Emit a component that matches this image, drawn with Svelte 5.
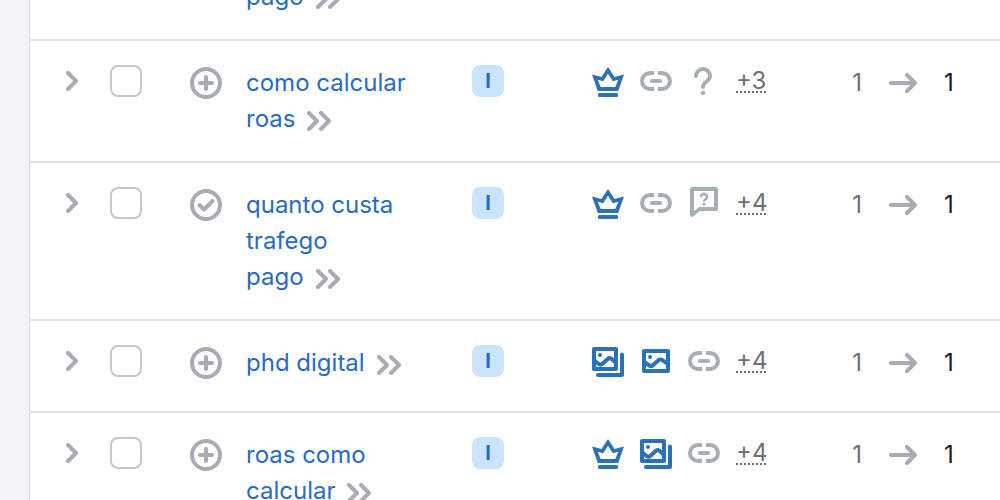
<script>
  const rows = [
    { start: 'como calcular', last: 'roas', added: false, features: ['crown', 'link', 'question'], more: 3 },
    { start: 'quanto custa trafego', last: 'pago', added: true, features: ['crown', 'link', 'bubble'], more: 4 },
    { start: 'phd', last: 'digital', added: false, features: ['images', 'image', 'link'], more: 4 },
    { start: 'roas como', last: 'calcular', added: false, features: ['crown', 'images', 'link'], more: 4 }
  ];
</script>

{#snippet doubleChevron()}
  <svg class="double" width="24" height="20" viewBox="0 0 24 20" aria-hidden="true">
    <path d="M2 2l8 8-8 8M14 2l8 8-8 8" />
  </svg>
{/snippet}

{#snippet feature(name)}
  <svg class="feature" class:blue={['crown', 'images', 'image'].includes(name)} viewBox="0 0 32 32" aria-hidden="true">
    {#if name === 'crown'}
      <path fill-rule="evenodd" d="M0 9.500L9.500 12 16 2l6.500 10L32 9.500 26.200 26H5.800ZM5.700 14.800L8.700 22h14.600l3-7.200-5.500 1.400L16 8.800l-4.800 7.400Z" />
      <rect x="6" y="28" width="20" height="4" rx="1.500" />
    {:else if name === 'link'}
      <path class="line" d="M14 8h-4a8 8 0 0 0 0 16h4M18 8h4a8 8 0 0 1 0 16h-4" />
      <rect x="10" y="14" width="12" height="4" rx="2" />
    {:else if name === 'question'}
      <path class="line round" d="M8 11a7 7 0 0 1 14 0c0 5.500-7 5.500-7 11" />
      <circle cx="15" cy="28" r="2.200" />
    {:else if name === 'bubble'}
      <path fill-rule="evenodd" d="M4 0h24a2 2 0 0 1 2 2v20a2 2 0 0 1-2 2H12l-7 5.600A2 2 0 0 1 2 28V2a2 2 0 0 1 2-2ZM6 4v20.200L11 20h15V4Z" />
      <path class="thin" d="M13 10a3 3 0 1 1 5.500 1.500C17.500 12.500 16 12.600 16 14.500" />
      <circle cx="16" cy="17" r="1.500" />
    {:else if name === 'images'}
      <path fill-rule="evenodd" d="M2 2h22a2 2 0 0 1 2 2v20a2 2 0 0 1-2 2H2a2 2 0 0 1-2-2V4a2 2 0 0 1 2-2ZM4 6v16h18V6Z" />
      <circle cx="8" cy="10" r="2" />
      <path class="hill" d="M3 16l4 3.200q1.500 1 3 0L16 13.700q2-1.500 4 0.500l3 3" />
      <path d="M28 9.500a2 2 0 0 1 4 0V30a2 2 0 0 1-2 2H6a2 2 0 0 1 0-4h22Z" />
    {:else}
      <path fill-rule="evenodd" d="M4 4h24a2 2 0 0 1 2 2v20a2 2 0 0 1-2 2H4a2 2 0 0 1-2-2V6a2 2 0 0 1 2-2ZM6 8v16h20V8Z" />
      <circle cx="10" cy="12" r="2" />
      <path class="hill" d="M5 17.500l4.500 3q1.500 1 3 0L18.500 15.200q2-1.500 4 0l4.500 3.300" />
    {/if}
  </svg>
{/snippet}

<main class="page">
  <div class="panel">
    <table>
      <colgroup>
        <col class="col-small" />
        <col class="col-small" />
        <col class="col-keyword" />
        <col class="col-intent" />
        <col class="col-features" />
        <col />
      </colgroup>
      <tbody>
        <tr class="partial">
          <td></td>
          <td></td>
          <td>
            <div class="keyword continued">
              <a href="#keyword"><span class="tail">pago{@render doubleChevron()}</span></a>
            </div>
          </td>
          <td></td>
          <td></td>
          <td></td>
        </tr>
        {#each rows as row}
          <tr>
            <td>
              <button class="expand" aria-label="Expand row">
                <svg width="12" height="20" viewBox="0 0 12 20" aria-hidden="true"><path d="M2 2l8 8-8 8" /></svg>
              </button>
            </td>
            <td><input type="checkbox" aria-label="Select {row.start} {row.last}" /></td>
            <td>
              <div class="keyword">
                <button class="add" aria-label={row.added ? 'Added to list' : 'Add to list'}>
                  <svg width="32" height="32" viewBox="0 0 32 32" aria-hidden="true">
                    <circle cx="16" cy="16" r="14" />
                    <path d={row.added ? 'M9.500 16l4.500 4.500L22.500 12' : 'M10 16h12M16 10v12'} />
                  </svg>
                </button>
                <a href="#keyword">{row.start} <span class="tail">{row.last}{@render doubleChevron()}</span></a>
              </div>
            </td>
            <td><span class="intent">I</span></td>
            <td>
              <div class="features">
                {#each row.features as name}
                  {@render feature(name)}
                {/each}
                <button class="more">+{row.more}</button>
              </div>
            </td>
            <td>
              <div class="position">
                <span class="before">1</span>
                <svg width="32" height="20" viewBox="0 0 32 20" aria-hidden="true"><path d="M4 10h24M20 2l8 8-8 8" /></svg>
                <span>1</span>
              </div>
            </td>
          </tr>
        {/each}
      </tbody>
    </table>
  </div>
</main>

<style>
  :global(body) {
    background: #f3f4f9;
  }

  .page {
    box-sizing: border-box;
    height: 100vh;
    overflow: hidden;
    padding-left: 30px;
    font-family: Inter, sans-serif;
    font-size: 24px;
    line-height: 36px;
    color: #191b23;
  }

  .panel {
    min-height: 100%;
    background: #fff;
    box-shadow: 0 0 1px 1px #dcdee6;
  }

  table {
    width: 100%;
    margin-top: -21px;
    table-layout: fixed;
    border-collapse: separate;
    border-spacing: 0;
  }

  .col-small {
    width: 80px;
  }

  .col-keyword {
    width: 282px;
  }

  .col-intent {
    width: 120px;
  }

  .col-features {
    width: 258px;
  }

  td {
    box-sizing: border-box;
    height: 92px;
    padding: 24px 0;
    border-bottom: 2px solid #e0e1e9;
    vertical-align: top;
  }

  .partial td {
    height: auto;
    padding-top: 0;
  }

  button {
    padding: 0;
    border: 0;
    background: none;
    font: inherit;
    color: inherit;
    cursor: pointer;
  }

  svg {
    flex: none;
  }

  .expand,
  .add,
  .double,
  .position svg {
    fill: none;
    stroke: #a9abb6;
    stroke-width: 4;
    stroke-linecap: round;
    stroke-linejoin: round;
  }

  .expand {
    display: flex;
    align-items: center;
    height: 32px;
    padding-left: 36px;
  }

  input {
    display: block;
    box-sizing: border-box;
    width: 32px;
    height: 32px;
    margin: 0;
    border: 2px solid #c4c7cf;
    border-radius: 8px;
    appearance: none;
    background: #fff;
  }

  .keyword {
    display: flex;
    align-items: flex-start;
    gap: 24px;
  }

  .continued {
    padding-left: 56px;
  }

  .add {
    display: flex;
    align-items: center;
    height: 36px;
  }

  a {
    max-width: 176px;
    color: #286ac4;
    text-decoration: none;
  }

  .tail {
    white-space: nowrap;
  }

  .double {
    margin-left: 12px;
    vertical-align: -4px;
  }

  .intent {
    display: block;
    width: 32px;
    border-radius: 8px;
    background: #c9e4fc;
    color: #286ac4;
    font-size: 20px;
    font-weight: 700;
    line-height: 32px;
    text-align: center;
  }

  .features {
    display: flex;
    gap: 16px;
    height: 32px;
  }

  .feature {
    width: 32px;
    height: 32px;
    fill: #a6afb3;
    stroke: none;
  }

  .feature.blue {
    fill: #2b71ba;
  }

  .line,
  .thin,
  .hill {
    fill: none;
    stroke: #a6afb3;
    stroke-width: 4;
  }

  .round {
    stroke-linecap: round;
  }

  .thin {
    stroke-width: 2.5;
  }

  .hill {
    stroke: #2b71ba;
    stroke-linejoin: round;
  }

  .more {
    color: #6c6e79;
    line-height: 32px;
    text-decoration: underline dotted 2px;
    text-decoration-skip-ink: none;
    text-underline-offset: 2px;
  }

  .position {
    display: flex;
    align-items: center;
    gap: 25px;
  }

  .before {
    min-width: 12px;
    color: #6c6e79;
    text-align: right;
  }
</style>
